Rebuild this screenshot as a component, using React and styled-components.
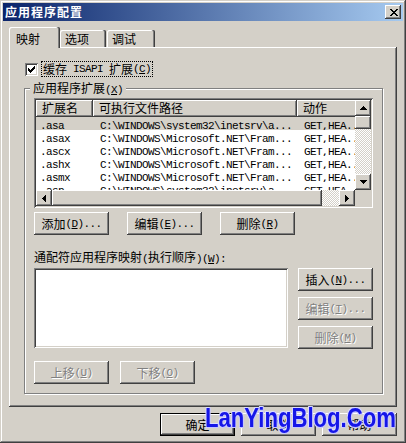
import React from 'react';
import styled, { createGlobalStyle } from 'styled-components';

const Global = createGlobalStyle`
  html, body { margin: 0; padding: 0; background: #d4d0c8; }
  body {
    width: 406px; height: 443px; overflow: hidden;
    font-family: "Noto Sans CJK SC", sans-serif; font-size: 12px; color: #000;
  }
`;

const raised = `box-shadow: inset -1px -1px #404040, inset 1px 1px #fff, inset -2px -2px #808080, inset 2px 2px #d4d0c8;`;
const sunken = `box-shadow: inset 1px 1px #808080, inset -1px -1px #fff, inset 2px 2px #404040, inset -2px -2px #d4d0c8;`;

const Window = styled.div`
  position: relative;
  box-sizing: border-box;
  width: 406px;
  height: 443px;
  padding: 3px;
  background: #d4d0c8;
  box-shadow: inset -1px -1px #404040, inset 1px 1px #d4d0c8, inset -2px -2px #808080, inset 2px 2px #fff;
  display: flex;
  flex-direction: column;
`;

const TitleBar = styled.div`
  height: 18px;
  display: flex;
  align-items: center;
  justify-content: space-between;
  padding: 0 2px;
  background: linear-gradient(to right, #0a246a, #a6caf0);
`;

const Title = styled.span`
  color: #fff;
  font-weight: 700;
  font-size: 12px;
  letter-spacing: 1px;
  line-height: 18px;
`;

const CloseBtn = styled.div`
  box-sizing: border-box;
  width: 16px;
  height: 14px;
  background: #d4d0c8;
  ${raised}
  display: flex;
  align-items: center;
  justify-content: center;
  padding-left: 1px;
`;

const TabStrip = styled.div`
  position: relative;
  z-index: 1;
  display: flex;
  align-items: flex-end;
  height: 20px;
  margin: 6px 0 0 6px;
`;

const Tab = styled.div`
  box-sizing: border-box;
  width: ${p => p.$w}px;
  height: ${p => (p.$active ? 21 : 17)}px;
  margin-bottom: ${p => (p.$active ? -1 : 0)}px;
  margin-left: ${p => p.$gap || 0}px;
  padding: ${p => (p.$active ? '5px 0 0 7px' : '2px 0 0 5px')};
  line-height: 14px;
  background: #d4d0c8;
  border-radius: 2px 2px 0 0;
  box-shadow: inset -1px 0 #404040, inset -2px 0 #808080, inset 1px 1px #fff;
`;

const Panel = styled.div`
  box-sizing: border-box;
  width: 388px;
  height: 360px;
  margin-left: 6px;
  padding: 14px 14px 0 15px;
  ${raised}
  display: flex;
  flex-direction: column;
`;

const CheckRow = styled.div`
  display: flex;
  align-items: center;
  gap: 3px;
  height: 16px;
  margin-left: 1px;
`;

const CheckBox = styled.div`
  box-sizing: border-box;
  width: 13px;
  height: 13px;
  background: #fff;
  ${sunken}
  display: flex;
  align-items: center;
  justify-content: center;
`;

const FocusLabel = styled.span`
  display: inline-flex;
  align-items: center;
  height: 14px;
  line-height: 14px;
  padding: 0 1px;
  border: 1px dotted #000;
  white-space: pre;
`;

const Group = styled.div`
  margin-top: 11px;
  border: 1px solid #808080;
  box-shadow: inset 1px 1px #fff, 1px 1px #fff;
  padding: 0 9px 9px 9px;
  display: flex;
  flex-direction: column;
`;

const GroupTitle = styled.div`
  align-self: flex-start;
  height: 14px;
  line-height: 14px;
  margin: -8px 0 0 -4px;
  padding: 0 3px;
  background: #d4d0c8;
  white-space: pre;
`;

const ListFrame = styled.div`
  box-sizing: border-box;
  height: 110px;
  margin-top: 3px;
  padding: 2px;
  background: #fff;
  ${sunken}
  display: grid;
  grid-template-columns: minmax(0, 1fr) 16px;
  grid-template-rows: minmax(0, 1fr) 16px;
`;

const Viewport = styled.div`
  overflow: hidden;
  min-width: 0;
`;

const HeaderRow = styled.div`
  display: flex;
  height: 17px;
`;

const HeaderCell = styled.div`
  box-sizing: border-box;
  flex: 0 0 ${p => p.$w}px;
  height: 17px;
  line-height: 16px;
  padding-left: 6px;
  background: #d4d0c8;
  ${raised}
  white-space: nowrap;
  overflow: hidden;
`;

const Row = styled.div`
  display: flex;
  height: 13px;
  background: ${p => (p.$sel ? '#d4d0c8' : '#fff')};
`;

const Cell = styled.div`
  box-sizing: border-box;
  flex: 0 0 ${p => p.$w}px;
  padding-left: ${p => p.$pad}px;
  line-height: 13px;
  white-space: pre;
  overflow: hidden;
`;

const VScroll = styled.div`
  display: flex;
  flex-direction: column;
`;

const HScroll = styled.div`
  display: flex;
`;

const ScrollBtn = styled.div`
  box-sizing: border-box;
  flex: 0 0 auto;
  width: ${p => p.$w || 16}px;
  height: ${p => p.$h || 16}px;
  background: #d4d0c8;
  ${raised}
  display: flex;
  align-items: center;
  justify-content: center;
`;

const Track = styled.div`
  flex: 1 1 auto;
  background-color: #fff;
  background-image: repeating-conic-gradient(#d4d0c8 0 25%, #fff 0 50%);
  background-size: 2px 2px;
`;

const Corner = styled.div`
  background: #d4d0c8;
`;

const BtnRow = styled.div`
  display: flex;
  gap: ${p => p.$gap}px;
  margin-top: ${p => p.$mt}px;
`;

const Button = styled.div`
  box-sizing: border-box;
  flex: 0 0 auto;
  width: 75px;
  height: 23px;
  background: #d4d0c8;
  ${p =>
    p.$default
      ? 'box-shadow: inset 0 0 0 1px #000, inset -2px -2px #404040, inset 2px 2px #fff, inset -3px -3px #808080, inset 3px 3px #d4d0c8;'
      : raised}
  display: flex;
  align-items: center;
  justify-content: center;
  line-height: 14px;
  white-space: pre;
  color: ${p => (p.$disabled ? '#808080' : '#000')};
  text-shadow: ${p => (p.$disabled ? '1px 1px 0 #fff' : 'none')};
`;

const WildLabel = styled.div`
  margin-top: 15px;
  height: 14px;
  line-height: 14px;
  white-space: pre;
`;

const WildRow = styled.div`
  display: flex;
  gap: 10px;
  margin-top: 4px;
`;

const ListBox = styled.div`
  box-sizing: border-box;
  width: 254px;
  height: 80px;
  background: #fff;
  ${sunken}
`;

const SideCol = styled.div`
  display: flex;
  flex-direction: column;
  gap: 6px;
`;

const Footer = styled.div`
  display: flex;
  justify-content: flex-end;
  gap: 6px;
  width: 388px;
  margin: 6px 0 0 6px;
`;

const Lat = styled.span`
  font-family: "Liberation Mono", monospace;
  font-size: 11px;
  letter-spacing: -0.6px;
  white-space: pre;
`;

const Cjk = styled.span`
  font-family: "Noto Sans CJK SC", sans-serif;
  font-size: 12px;
`;

const Und = styled.span`
  text-decoration: underline;
  text-underline-offset: 1px;
`;

const Watermark = styled.div`
  position: absolute;
  left: 205px;
  top: 404px;
  font-family: "Liberation Sans", Arial, sans-serif;
  font-weight: 700;
  font-size: 28px;
  line-height: 28px;
  color: #1616e8;
  white-space: nowrap;
  transform: scaleX(0.79);
  transform-origin: left top;
  text-shadow: 1px 1px 0 #c4c4ff, -1px -1px 0 #dcdcff, 1px -1px 0 #d0d0ff, -1px 1px 0 #d0d0ff;
  pointer-events: none;
`;

function Txt({ s }) {
  const out = [];
  const re = /([\x00-\x7F]+)|([^\x00-\x7F]+)/g;
  let m;
  let k = 0;
  while ((m = re.exec(s))) {
    if (m[1]) {
      const parts = m[1].split('&');
      out.push(
        <Lat key={k++}>
          {parts.map((p, i) =>
            i === 0 ? (
              <React.Fragment key={i}>{p}</React.Fragment>
            ) : (
              <React.Fragment key={i}>
                <Und>{p[0]}</Und>
                {p.slice(1)}
              </React.Fragment>
            )
          )}
        </Lat>
      );
    } else {
      out.push(<Cjk key={k++}>{m[2]}</Cjk>);
    }
  }
  return <>{out}</>;
}

const ARROWS = {
  up: { w: 7, h: 4, r: [[3, 0, 1, 1], [2, 1, 3, 1], [1, 2, 5, 1], [0, 3, 7, 1]] },
  down: { w: 7, h: 4, r: [[0, 0, 7, 1], [1, 1, 5, 1], [2, 2, 3, 1], [3, 3, 1, 1]] },
  left: { w: 4, h: 7, r: [[0, 3, 1, 1], [1, 2, 1, 3], [2, 1, 1, 5], [3, 0, 1, 7]] },
  right: { w: 4, h: 7, r: [[0, 0, 1, 7], [1, 1, 1, 5], [2, 2, 1, 3], [3, 3, 1, 1]] },
};

function Arrow({ dir }) {
  const a = ARROWS[dir];
  return (
    <svg width={a.w} height={a.h} viewBox={`0 0 ${a.w} ${a.h}`} shapeRendering="crispEdges">
      {a.r.map(([x, y, w, h], i) => (
        <rect key={i} x={x} y={y} width={w} height={h} fill="#000" />
      ))}
    </svg>
  );
}

function pixels(rows) {
  const rects = [];
  rows.forEach((row, y) => {
    [...row].forEach((c, x) => {
      if (c === 'X') rects.push(<rect key={`${x}-${y}`} x={x} y={y} width={1} height={1} fill="#000" />);
    });
  });
  return rects;
}

const CHECK = ['......X', '.....XX', 'X...XXX', 'XX.XXX.', 'XXXXX..', '.XXX...', '..X....'];
const CROSS = ['XX....XX', '.XX..XX.', '..XXXX..', '...XX...', '..XXXX..', '.XX..XX.', 'XX....XX'];

function CheckMark() {
  return (
    <svg width="7" height="7" viewBox="0 0 7 7" shapeRendering="crispEdges">
      {pixels(CHECK)}
    </svg>
  );
}

function CloseGlyph() {
  return (
    <svg width="8" height="7" viewBox="0 0 8 7" shapeRendering="crispEdges">
      {pixels(CROSS)}
    </svg>
  );
}

const COLS = [57, 204, 90];
const PADS = [4, 7, 7];
const ROWS = [
  ['.asa', 'C:\\WINDOWS\\system32\\inetsrv\\a...', 'GET,HEA...'],
  ['.asax', 'C:\\WINDOWS\\Microsoft.NET\\Fram...', 'GET,HEA...'],
  ['.ascx', 'C:\\WINDOWS\\Microsoft.NET\\Fram...', 'GET,HEA...'],
  ['.ashx', 'C:\\WINDOWS\\Microsoft.NET\\Fram...', 'GET,HEA...'],
  ['.asmx', 'C:\\WINDOWS\\Microsoft.NET\\Fram...', 'GET,HEA...'],
  ['.asp', 'C:\\WINDOWS\\system32\\inetsrv\\a...', 'GET,HEA...'],
];

export default function App() {
  return (
    <>
      <Global />
      <Window>
        <TitleBar>
          <Title>应用程序配置</Title>
          <CloseBtn>
            <CloseGlyph />
          </CloseBtn>
        </TitleBar>

        <TabStrip>
          <Tab $active $w={51}>映射</Tab>
          <Tab $w={46} $gap={0}>选项</Tab>
          <Tab $w={48} $gap={1}>调试</Tab>
        </TabStrip>

        <Panel>
          <CheckRow>
            <CheckBox>
              <CheckMark />
            </CheckBox>
            <FocusLabel>
              <Txt s="缓存 ISAPI 扩展(&C)" />
            </FocusLabel>
          </CheckRow>

          <Group>
            <GroupTitle>
              <Txt s="应用程序扩展(&X)" />
            </GroupTitle>

            <ListFrame>
              <Viewport>
                <HeaderRow>
                  <HeaderCell $w={COLS[0]}>扩展名</HeaderCell>
                  <HeaderCell $w={COLS[1]}>可执行文件路径</HeaderCell>
                  <HeaderCell $w={COLS[2]}>动作</HeaderCell>
                </HeaderRow>
                {ROWS.map((r, i) => (
                  <Row key={i} $sel={i === 0}>
                    {r.map((c, j) => (
                      <Cell key={j} $w={COLS[j]} $pad={PADS[j]}>
                        <Lat>{c}</Lat>
                      </Cell>
                    ))}
                  </Row>
                ))}
              </Viewport>
              <VScroll>
                <ScrollBtn><Arrow dir="up" /></ScrollBtn>
                <ScrollBtn $h={13} />
                <Track />
                <ScrollBtn><Arrow dir="down" /></ScrollBtn>
              </VScroll>
              <HScroll>
                <ScrollBtn><Arrow dir="left" /></ScrollBtn>
                <ScrollBtn $w={270} />
                <Track />
                <ScrollBtn><Arrow dir="right" /></ScrollBtn>
              </HScroll>
              <Corner />
            </ListFrame>

            <BtnRow $gap={18} $mt={4}>
              <Button><Txt s="添加(&D)..." /></Button>
              <Button><Txt s="编辑(&E)..." /></Button>
              <Button><Txt s="删除(&R)" /></Button>
            </BtnRow>

            <WildLabel>
              <Txt s="通配符应用程序映射(执行顺序)(&W):" />
            </WildLabel>

            <WildRow>
              <ListBox />
              <SideCol>
                <Button><Txt s="插入(&N)..." /></Button>
                <Button $disabled><Txt s="编辑(&T)..." /></Button>
                <Button $disabled><Txt s="删除(&M)" /></Button>
              </SideCol>
            </WildRow>

            <BtnRow $gap={11} $mt={12}>
              <Button $disabled><Txt s="上移(&U)" /></Button>
              <Button $disabled><Txt s="下移(&O)" /></Button>
            </BtnRow>
          </Group>
        </Panel>

        <Footer>
          <Button $default>确定</Button>
          <Button>取消</Button>
          <Button>帮助</Button>
        </Footer>

        <Watermark>LanYingBlog.Com</Watermark>
      </Window>
    </>
  );
}
